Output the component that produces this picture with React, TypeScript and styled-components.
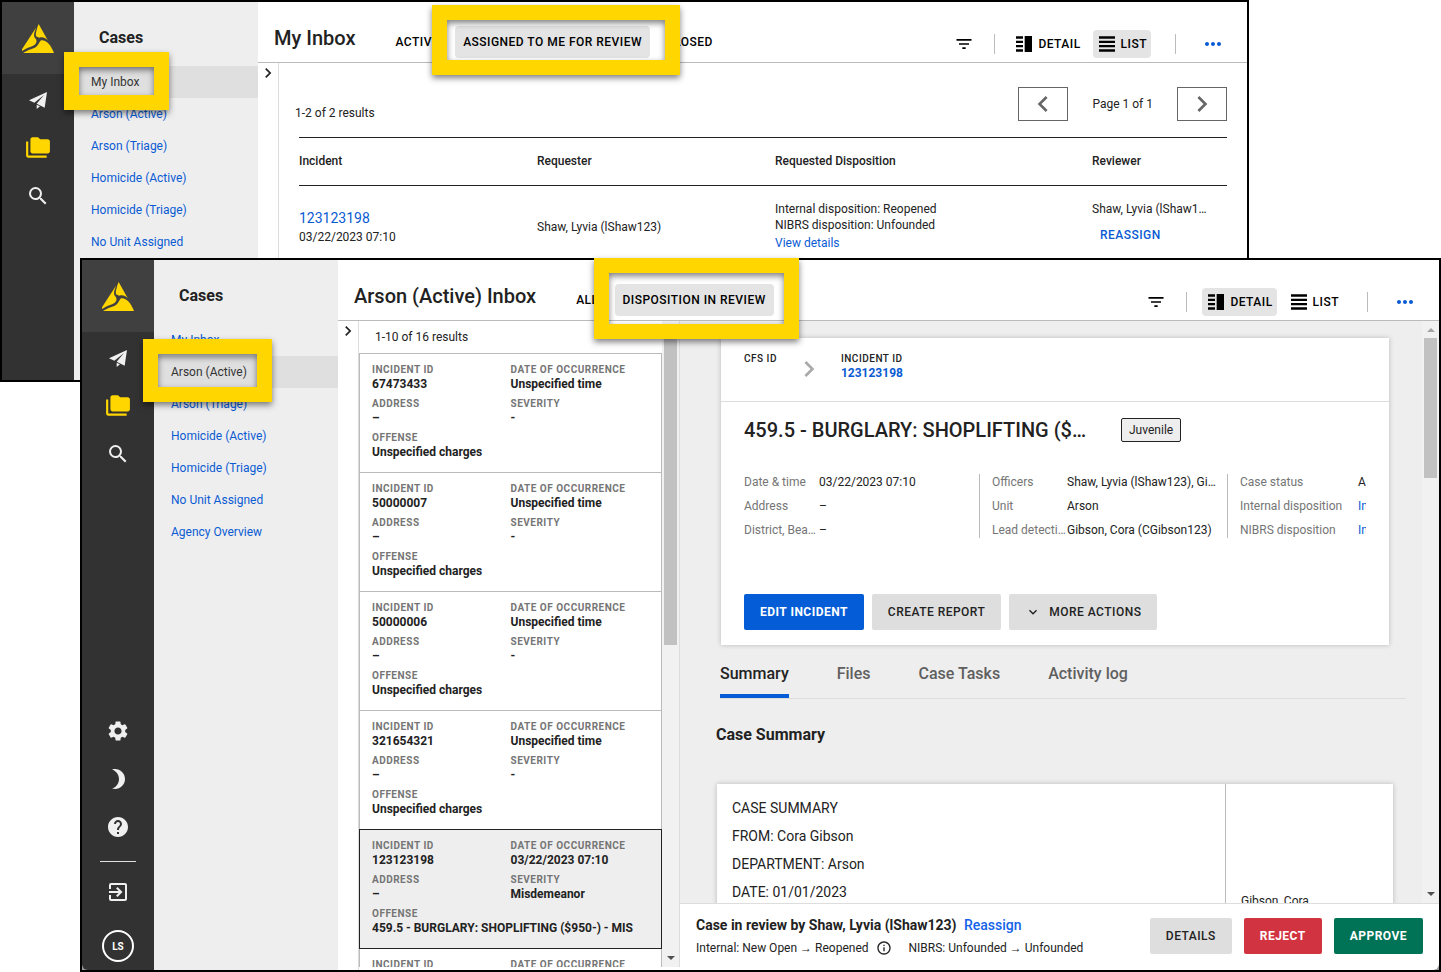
import React from 'react';
import styled, { createGlobalStyle, css } from 'styled-components';
import {
  MdBrightness3,
  MdChevronLeft,
  MdChevronRight,
  MdExitToApp,
  MdExpandMore,
  MdFilterList,
  MdFolderCopy,
  MdHelp,
  MdInfoOutline,
  MdMoreHoriz,
  MdSearch,
  MdSettings,
} from 'react-icons/md';

const color = {
  ink: '#222222',
  muted: '#757575',
  line: '#bbbbbb',
  softLine: '#dddddd',
  panel: '#eeeeee',
  rail: '#323232',
  railTop: '#404040',
  link: '#0a5bd3',
  accent: '#ffd600',
};

const GlobalStyle = createGlobalStyle`
  *, *::before, *::after { box-sizing: border-box; }
  body { margin: 0; background: #fff; }
  body, button { font-family: Roboto, "Liberation Sans", sans-serif; }
  body { color: ${color.ink}; font-size: 12px; line-height: 16px; }
  button { border: 0; background: none; padding: 0; color: inherit; cursor: pointer; }
  a { color: ${color.link}; text-decoration: none; }
  h1, h2, h3, p, ul, dl, dd { margin: 0; padding: 0; }
  ul { list-style: none; }
  svg { display: block; flex: none; }
`;

const Desktop = styled.div`
  position: relative;
  min-height: 100vh;
  overflow: hidden;
`;

const AppWindow = styled.section<{ $front?: boolean }>`
  position: absolute;
  display: flex;
  border: 2px solid #000;
  background: #fff;
  ${({ $front }) =>
    $front
      ? css`
          inset: 258px 0 0 80px;
          background: #999;
        `
      : css`
          inset: 0 192px auto 0;
          height: 382px;
        `}
`;

const Rail = styled.nav<{ $front?: boolean }>`
  flex: none;
  display: flex;
  flex-direction: column;
  align-items: center;
  width: 72px;
  background: ${color.rail};
  color: #f0f0f0;
  border-bottom-left-radius: ${({ $front }) => ($front ? '6px' : '0')};
`;

const Brand = styled.a`
  display: flex;
  align-items: center;
  justify-content: center;
  width: 100%;
  height: 72px;
  margin-bottom: 2px;
  background: ${color.railTop};
`;

const RailButton = styled.button<{ $active?: boolean }>`
  display: flex;
  align-items: center;
  justify-content: center;
  width: 48px;
  height: 48px;
  color: ${({ $active }) => ($active ? color.accent : 'inherit')};
`;

const RailFoot = styled.div`
  display: flex;
  flex-direction: column;
  align-items: center;
  margin-top: auto;
`;

const RailRule = styled.hr`
  width: 36px;
  height: 1px;
  margin: 10px 0 6px;
  border: 0;
  background: #e0e0e0;
`;

const Avatar = styled.button`
  width: 32px;
  height: 32px;
  margin: 14px 0 8px;
  border: 2px solid #fff;
  border-radius: 50%;
  color: #fff;
  font-size: 10px;
  font-weight: 700;
`;

const Sidebar = styled.aside`
  flex: none;
  width: 184px;
  background: ${color.panel};
`;

const SidebarTitle = styled.h2`
  height: 64px;
  padding: 26px 25px 0;
  font-size: 16px;
  line-height: 20px;
  font-weight: 700;
`;

const NavItem = styled.li<{ $active?: boolean }>`
  position: relative;
  padding: 8px 17px;
  background: ${({ $active }) => ($active ? '#dfdfdf' : 'transparent')};
  a {
    color: ${({ $active }) => ($active ? '#333' : color.link)};
  }
`;

/* Call-out frame that surrounds the item it is placed in. */
const Callout = styled.span<{ $inset: string }>`
  position: absolute;
  z-index: 5;
  inset: ${({ $inset }) => $inset};
  border: 15px solid ${color.accent};
  filter: drop-shadow(0 3px 3px rgba(0, 0, 0, 0.5));
  pointer-events: none;
`;

const Main = styled.main<{ $front?: boolean }>`
  flex: 1;
  min-width: 0;
  display: flex;
  flex-direction: column;
  background: #fff;
  border-bottom-right-radius: ${({ $front }) => ($front ? '6px' : '0')};
`;

const Header = styled.header`
  flex: none;
  display: flex;
  align-items: flex-end;
  height: 61px;
  padding: 0 14px 4px 16px;
  border-bottom: 1px solid ${color.line};
`;

const HeaderTitle = styled.h1`
  margin: 0 32px 8px 0;
  font-size: 20px;
  line-height: 24px;
  font-weight: 500;
  white-space: nowrap;
`;

const Tabs = styled.div`
  display: flex;
  gap: 8px;
`;

const Tab = styled.button<{ $active?: boolean }>`
  position: relative;
  height: 32px;
  padding: 0 8px;
  border-radius: 4px;
  background: ${({ $active }) => ($active ? '#e4e4e4' : 'transparent')};
  color: #000;
  font-size: 12px;
  line-height: 16px;
  font-weight: 500;
  letter-spacing: 0.04em;
  white-space: nowrap;
`;

const Tools = styled.div`
  display: flex;
  align-items: center;
  height: 28px;
  margin-left: auto;
`;

const Divider = styled.span<{ $gap: string }>`
  width: 1px;
  height: 20px;
  margin: ${({ $gap }) => $gap};
  background: ${color.line};
`;

const ModeButton = styled.button<{ $active?: boolean }>`
  display: flex;
  align-items: center;
  gap: 6px;
  height: 28px;
  margin-right: 8px;
  padding: 0 4px 0 6px;
  border-radius: 4px;
  background: ${({ $active }) => ($active ? '#e4e4e4' : 'transparent')};
  color: #000;
  font-size: 12px;
  font-weight: 500;
  letter-spacing: 0.04em;
`;

const ToolButton = styled.button<{ $blue?: boolean }>`
  padding: 0 ${({ $blue }) => ($blue ? '8px' : '4px')};
  color: ${({ $blue }) => ($blue ? color.link : '#000')};
`;

const Body = styled.div`
  flex: 1;
  min-height: 0;
  display: flex;
  overflow: hidden;
`;

const Collapse = styled.button`
  flex: none;
  align-self: stretch;
  display: flex;
  justify-content: center;
  align-items: flex-start;
  width: 21px;
  border-right: 1px solid ${color.softLine};
`;

/* ---- request list (back window) ---- */

const Requests = styled.div`
  flex: 1;
  min-width: 0;
  padding: 24px 20px 0;
`;

const Pager = styled.div`
  display: flex;
  align-items: flex-start;
  gap: 24px;
  height: 50px;
`;

const ResultCount = styled.p`
  margin: 18px auto 0 -4px;
`;

const PageLabel = styled.span`
  line-height: 34px;
`;

const PageButton = styled.button`
  display: flex;
  align-items: center;
  justify-content: center;
  width: 50px;
  height: 34px;
  border: 1px solid #666;
  color: #666;
`;

const RequestTable = styled.table`
  width: 100%;
  table-layout: fixed;
  border-collapse: collapse;
  text-align: left;
  th {
    height: 48px;
    padding: 0 0 2px;
    border-top: 1px solid ${color.ink};
    border-bottom: 1px solid ${color.ink};
    font-weight: 500;
  }
  td {
    padding: 15px 20px 14px 0;
    white-space: nowrap;
    overflow: hidden;
    text-overflow: ellipsis;
  }
`;

const CaseLink = styled.a`
  display: block;
  margin: 2px 0 3px;
  font-size: 14px;
`;

const DetailsLink = styled.a`
  display: block;
  margin: 2px 0 1px;
`;

const TextButton = styled.button`
  display: block;
  height: 35px;
  padding: 0 8px;
  color: ${color.link};
  font-size: 12px;
  font-weight: 500;
  letter-spacing: 0.04em;
`;

/* ---- inbox list (front window) ---- */

const Inbox = styled.div`
  flex: none;
  display: flex;
  margin-bottom: 3px;
  border-right: 1px solid ${color.softLine};
`;

const InboxList = styled.div`
  width: 303px;
  overflow: hidden;
`;

const InboxCount = styled.p`
  padding: 8px 16px;
`;

const IncidentCard = styled.li<{ $selected?: boolean }>`
  position: relative;
  z-index: ${({ $selected }) => ($selected ? 1 : 0)};
  height: 120px;
  margin-bottom: -1px;
  padding: 9px 12px;
  border: 1px solid ${({ $selected }) => ($selected ? color.ink : color.line)};
  background: ${({ $selected }) => ($selected ? color.panel : '#fff')};
`;

const CardFields = styled.dl`
  display: grid;
  grid-template-columns: 1fr 1fr;
  row-gap: 6px;
`;

const CardField = styled.div<{ $wide?: boolean }>`
  grid-column: ${({ $wide }) => ($wide ? '1 / -1' : 'auto')};
  line-height: 14px;
  white-space: nowrap;
  dt {
    color: ${color.muted};
    font-size: 10px;
    font-weight: 700;
    letter-spacing: 0.05em;
  }
  dd {
    font-weight: 700;
  }
`;

const ScrollTrack = styled.div`
  flex: none;
  display: flex;
  flex-direction: column;
  align-items: center;
  width: 17px;
  padding-bottom: 1px;
  background: #f1f1f1;
`;

const ScrollArrow = styled.span<{ $down?: boolean }>`
  display: flex;
  align-items: center;
  justify-content: center;
  height: 17px;
  margin-top: ${({ $down }) => ($down ? 'auto' : '0')};
  &::before {
    content: '';
    border: 4px solid transparent;
    border-top-width: ${({ $down }) => ($down ? '4px' : '0')};
    border-bottom-width: ${({ $down }) => ($down ? '0' : '4px')};
    border-top-color: ${({ $down }) => ($down ? '#505050' : 'transparent')};
    border-bottom-color: ${({ $down }) => ($down ? 'transparent' : '#a3a3a3')};
  }
`;

const ScrollThumb = styled.span<{ $length: string }>`
  width: 13px;
  height: ${({ $length }) => $length};
  background: #c1c1c1;
`;

/* ---- incident detail (front window) ---- */

const Detail = styled.div`
  flex: 1;
  min-width: 0;
  display: flex;
  flex-direction: column;
`;

const DetailView = styled.div`
  flex: 1;
  min-height: 0;
  display: flex;
  overflow: hidden;
  background: ${color.panel};
`;

const DetailContent = styled.div`
  flex: 1;
  min-width: 0;
  padding: 17px 16px 0 40px;
`;

const cardSurface = css`
  background: #fff;
  box-shadow: 0 0 5px rgba(0, 0, 0, 0.22);
`;

const IncidentPanel = styled.section`
  margin: 0 17px 0 1px;
  ${cardSurface}
`;

const Trail = styled.div`
  display: flex;
  height: 64px;
  padding: 14px 23px;
  border-bottom: 1px solid ${color.softLine};
  line-height: 14px;
  svg {
    margin: 1px 16px 0;
    color: #aaa;
  }
`;

const TrailStep = styled.div`
  span {
    display: block;
    font-size: 10px;
    font-weight: 500;
    letter-spacing: 0.05em;
  }
  a {
    font-weight: 700;
  }
`;

const PanelBody = styled.div`
  padding: 16px 23px 15px;
`;

const TitleRow = styled.div`
  display: flex;
  align-items: center;
  gap: 32px;
  margin-bottom: 32px;
`;

const IncidentTitle = styled.h2`
  width: 345px;
  overflow: hidden;
  font-size: 20px;
  line-height: 24px;
  font-weight: 500;
  text-overflow: ellipsis;
  white-space: nowrap;
`;

const Tag = styled.span`
  padding: 3px 7px;
  border: 1px solid ${color.ink};
  border-radius: 2px;
  background: ${color.panel};
`;

const FactColumns = styled.div`
  display: flex;
  gap: 12px;
  margin-bottom: 56px;
  overflow: hidden;
`;

const Facts = styled.dl<{ $last?: boolean }>`
  flex: ${({ $last }) => ($last ? '1' : '0 0 236px')};
  min-width: 0;
  display: grid;
  grid-template-columns: ${({ $last }) => ($last ? '118px' : '75px')} 1fr;
  row-gap: 8px;
  padding-right: ${({ $last }) => ($last ? '0' : '11px')};
  border-right: ${({ $last }) => ($last ? '0' : `1px solid ${color.line}`)};
  dt,
  dd {
    min-width: 0;
    overflow: hidden;
    text-overflow: ${({ $last }) => ($last ? 'clip' : 'ellipsis')};
    white-space: nowrap;
  }
  dt {
    color: ${color.muted};
  }
`;

const Actions = styled.div<{ $gap: string }>`
  display: flex;
  gap: ${({ $gap }) => $gap};
`;

const tones = {
  plain: css`
    background: #dedede;
    color: ${color.ink};
    font-weight: 500;
  `,
  primary: css`
    background: #045dd6;
    color: #fff;
    font-weight: 700;
  `,
  danger: css`
    background: #d23341;
    color: #fff;
    font-weight: 700;
  `,
  success: css`
    background: #007256;
    color: #fff;
    font-weight: 700;
  `,
};

const ActionButton = styled.button<{ $tone: keyof typeof tones }>`
  display: flex;
  align-items: center;
  gap: 8px;
  height: 36px;
  padding: 0 16px;
  border-radius: 2px;
  font-size: 12px;
  letter-spacing: 0.04em;
  white-space: nowrap;
  ${({ $tone }) => tones[$tone]}
`;

const DetailTabs = styled.div`
  display: flex;
  gap: 48px;
  height: 54px;
  border-bottom: 1px solid ${color.softLine};
`;

const DetailTab = styled.button<{ $active?: boolean }>`
  padding-top: 7px;
  border-bottom: 4px solid ${({ $active }) => ($active ? '#045dd6' : 'transparent')};
  color: ${({ $active }) => ($active ? color.ink : '#5f5f5f')};
  font-size: 16px;
  font-weight: 500;
`;

const SummaryTitle = styled.h3`
  margin: 26px 0 39px -4px;
  font-size: 16px;
  line-height: 20px;
  font-weight: 700;
`;

const SummaryCard = styled.section`
  display: flex;
  height: 234px;
  margin: 0 13px 0 -3px;
  ${cardSurface}
`;

const SummaryText = styled.div`
  flex: 1;
  padding: 10px 15px;
  border-right: 1px solid ${color.line};
  font-size: 14px;
  line-height: 28px;
`;

const SummaryAuthor = styled.div`
  display: flex;
  align-items: center;
  width: 167px;
  padding: 0 15px;
`;

const ReviewBar = styled.footer`
  flex: none;
  display: flex;
  align-items: center;
  justify-content: space-between;
  height: 67px;
  padding: 13px 16px 15px;
  border-top: 1px solid ${color.softLine};
`;

const ReviewTitle = styled.p`
  margin-bottom: 7px;
  font-size: 14px;
  font-weight: 700;
  a {
    margin-left: 4px;
    font-weight: 500;
    color: #1463e8;
  }
`;

const ReviewLine = styled.p`
  display: flex;
  align-items: center;
  svg {
    margin: 0 17px 0 7px;
  }
`;

/* ---- drawings ---- */

const Logo = () => (
  <svg width="32" height="29" viewBox="0 0 96 87" fill={color.accent} aria-hidden="true">
    <path d="M42 11 L0 76 V81 C10 74 22 70 32 66 C42 61 45 55 43 48 C41 43 36 42 36 34 C36 25 40 19 42 11z" />
    <path d="M50 0 L46 10 C44 20 40 28 42 37 L52 41 C62 37 72 42 78 50 C82 56 86 64 93 77z" />
    <path d="M3 87 H96 C92 77 87 67 80 59 C73 52 66 48 57 49 C50 57 48 67 37 72 C26 76 14 80 3 87z" />
  </svg>
);

const Plane = () => (
  <svg width="18" height="17" viewBox="0 0 54 51" fill="currentColor" aria-hidden="true">
    <path d="M54 0 L0 25 L16 32 L45 9 L23 35 L47 47z" />
    <path d="M23 38 V51 L33 43z" />
  </svg>
);

const DetailGlyph = () => (
  <svg width="16" height="16" viewBox="0 0 48 48" aria-hidden="true">
    <path d="M0 1h21v7H0zM0 14h21v7H0zM0 27h21v7H0zM0 40h21v7H0zM26 0h22v48H26z" />
  </svg>
);

const ListGlyph = () => (
  <svg width="16" height="16" viewBox="0 0 48 48" aria-hidden="true">
    <path d="M0 1h48v7H0zM0 14h48v7H0zM0 27h48v7H0zM0 40h48v7H0z" />
  </svg>
);

/* ---- composed parts ---- */

const RailTop = () => (
  <>
    <Brand href="#" aria-label="Home">
      <Logo />
    </Brand>
    <RailButton aria-label="Dispatch">
      <Plane />
    </RailButton>
    <RailButton $active aria-label="Cases">
      <MdFolderCopy size={26} />
    </RailButton>
    <RailButton aria-label="Search">
      <MdSearch size={24} />
    </RailButton>
  </>
);

const CaseNav = ({ items, current, inset }: { items: string[]; current: string; inset: string }) => (
  <Sidebar>
    <SidebarTitle>Cases</SidebarTitle>
    <ul>
      {items.map((item) => (
        <NavItem key={item} $active={item === current}>
          <a href="#">{item}</a>
          {item === current && <Callout $inset={inset} />}
        </NavItem>
      ))}
    </ul>
  </Sidebar>
);

interface TopBarProps {
  title: string;
  tabs: string[];
  current: string;
  inset: string;
  mode: 'detail' | 'list';
}

const TopBar = ({ title, tabs, current, inset, mode }: TopBarProps) => (
  <Header>
    <HeaderTitle>{title}</HeaderTitle>
    <Tabs>
      {tabs.map((tab) => (
        <Tab key={tab} $active={tab === current}>
          {tab}
          {tab === current && <Callout $inset={inset} />}
        </Tab>
      ))}
    </Tabs>
    <Tools>
      <ToolButton aria-label="Filter">
        <MdFilterList size={20} />
      </ToolButton>
      <Divider $gap="0 15px 0 16px" />
      <ModeButton $active={mode === 'detail'}>
        <DetailGlyph />
        DETAIL
      </ModeButton>
      <ModeButton $active={mode === 'list'}>
        <ListGlyph />
        LIST
      </ModeButton>
      <Divider $gap="0 17px 0 16px" />
      <ToolButton $blue aria-label="More">
        <MdMoreHoriz size={24} />
      </ToolButton>
    </Tools>
  </Header>
);

const navItems = [
  'My Inbox',
  'Arson (Active)',
  'Arson (Triage)',
  'Homicide (Active)',
  'Homicide (Triage)',
  'No Unit Assigned',
];

interface Incident {
  id: string;
  date: string;
  severity: string;
  offense: string;
}

const blank = { date: 'Unspecified time', severity: '-', offense: 'Unspecified charges' };

const incidents: Incident[] = [
  { id: '67473433', ...blank },
  { id: '50000007', ...blank },
  { id: '50000006', ...blank },
  { id: '321654321', ...blank },
  {
    id: '123123198',
    date: '03/22/2023 07:10',
    severity: 'Misdemeanor',
    offense: '459.5 - BURGLARY: SHOPLIFTING ($950-) - MIS',
  },
  { id: '', ...blank },
];

const MyInboxWindow = () => (
  <AppWindow>
    <Rail>
      <RailTop />
    </Rail>
    <CaseNav items={navItems} current="My Inbox" inset="-14px 89px -12px -10px" />
    <Main>
      <TopBar
        title="My Inbox"
        tabs={['ACTIVE', 'ASSIGNED TO ME FOR REVIEW', 'CLOSED']}
        current="ASSIGNED TO ME FOR REVIEW"
        inset="-21px -30px -17px -23px"
        mode="list"
      />
      <Body>
        <Collapse aria-label="Expand panel">
          <MdChevronRight size={20} />
        </Collapse>
        <Requests>
          <Pager>
            <ResultCount>1-2 of 2 results</ResultCount>
            <PageButton aria-label="Previous page">
              <MdChevronLeft size={32} />
            </PageButton>
            <PageLabel>Page 1 of 1</PageLabel>
            <PageButton aria-label="Next page">
              <MdChevronRight size={32} />
            </PageButton>
          </Pager>
          <RequestTable>
            <colgroup>
              <col width="238" />
              <col width="238" />
              <col />
              <col width="135" />
            </colgroup>
            <thead>
              <tr>
                <th>Incident</th>
                <th>Requester</th>
                <th>Requested Disposition</th>
                <th>Reviewer</th>
              </tr>
            </thead>
            <tbody>
              <tr>
                <td>
                  <CaseLink href="#">123123198</CaseLink>
                  03/22/2023 07:10
                </td>
                <td>Shaw, Lyvia (lShaw123)</td>
                <td>
                  Internal disposition: Reopened
                  <br />
                  NIBRS disposition: Unfounded
                  <DetailsLink href="#">View details</DetailsLink>
                </td>
                <td>
                  Shaw, Lyvia (lShaw123)
                  <TextButton>REASSIGN</TextButton>
                </td>
              </tr>
            </tbody>
          </RequestTable>
        </Requests>
      </Body>
    </Main>
  </AppWindow>
);

const IncidentList = () => (
  <Inbox>
    <InboxList>
      <InboxCount>1-10 of 16 results</InboxCount>
      <ul>
        {incidents.map(({ id, date, severity, offense }) => (
          <IncidentCard key={id} $selected={id === '123123198'}>
            <CardFields>
              <CardField>
                <dt>INCIDENT ID</dt>
                <dd>{id}</dd>
              </CardField>
              <CardField>
                <dt>DATE OF OCCURRENCE</dt>
                <dd>{id && date}</dd>
              </CardField>
              {id && (
                <>
                  <CardField>
                    <dt>ADDRESS</dt>
                    <dd>–</dd>
                  </CardField>
                  <CardField>
                    <dt>SEVERITY</dt>
                    <dd>{severity}</dd>
                  </CardField>
                  <CardField $wide>
                    <dt>OFFENSE</dt>
                    <dd>{offense}</dd>
                  </CardField>
                </>
              )}
            </CardFields>
          </IncidentCard>
        ))}
      </ul>
    </InboxList>
    <ScrollTrack>
      <ScrollArrow />
      <ScrollThumb $length="307px" />
      <ScrollArrow $down />
    </ScrollTrack>
  </Inbox>
);

const IncidentDetail = () => (
  <Detail>
    <DetailView>
      <DetailContent>
        <IncidentPanel>
          <Trail>
            <TrailStep>
              <span>CFS ID</span>
            </TrailStep>
            <MdChevronRight size={32} />
            <TrailStep>
              <span>INCIDENT ID</span>
              <a href="#">123123198</a>
            </TrailStep>
          </Trail>
          <PanelBody>
            <TitleRow>
              <IncidentTitle>459.5 - BURGLARY: SHOPLIFTING ($950-) - MIS</IncidentTitle>
              <Tag>Juvenile</Tag>
            </TitleRow>
            <FactColumns>
              <Facts>
                <dt>Date &amp; time</dt>
                <dd>03/22/2023 07:10</dd>
                <dt>Address</dt>
                <dd>–</dd>
                <dt>District, Beat, Area</dt>
                <dd>–</dd>
              </Facts>
              <Facts>
                <dt>Officers</dt>
                <dd>Shaw, Lyvia (lShaw123), Gibson, Cora</dd>
                <dt>Unit</dt>
                <dd>Arson</dd>
                <dt>Lead detective</dt>
                <dd>Gibson, Cora (CGibson123)</dd>
              </Facts>
              <Facts $last>
                <dt>Case status</dt>
                <dd>Active</dd>
                <dt>Internal disposition</dt>
                <dd>
                  <a href="#">In review</a>
                </dd>
                <dt>NIBRS disposition</dt>
                <dd>
                  <a href="#">In review</a>
                </dd>
              </Facts>
            </FactColumns>
            <Actions $gap="8px">
              <ActionButton $tone="primary">EDIT INCIDENT</ActionButton>
              <ActionButton $tone="plain">CREATE REPORT</ActionButton>
              <ActionButton $tone="plain">
                <MdExpandMore size={16} />
                MORE ACTIONS
              </ActionButton>
            </Actions>
          </PanelBody>
        </IncidentPanel>
        <DetailTabs>
          <DetailTab $active>Summary</DetailTab>
          <DetailTab>Files</DetailTab>
          <DetailTab>Case Tasks</DetailTab>
          <DetailTab>Activity log</DetailTab>
        </DetailTabs>
        <SummaryTitle>Case Summary</SummaryTitle>
        <SummaryCard>
          <SummaryText>
            <p>CASE SUMMARY</p>
            <p>FROM: Cora Gibson</p>
            <p>DEPARTMENT: Arson</p>
            <p>DATE: 01/01/2023</p>
          </SummaryText>
          <SummaryAuthor>Gibson, Cora</SummaryAuthor>
        </SummaryCard>
      </DetailContent>
      <ScrollTrack>
        <ScrollArrow />
        <ScrollThumb $length="140px" />
        <ScrollArrow $down />
      </ScrollTrack>
    </DetailView>
    <ReviewBar>
      <div>
        <ReviewTitle>
          Case in review by Shaw, Lyvia (lShaw123) <a href="#">Reassign</a>
        </ReviewTitle>
        <ReviewLine>
          Internal: New Open → Reopened
          <MdInfoOutline size={16} />
          NIBRS: Unfounded → Unfounded
        </ReviewLine>
      </div>
      <Actions $gap="12px">
        <ActionButton $tone="plain">DETAILS</ActionButton>
        <ActionButton $tone="danger">REJECT</ActionButton>
        <ActionButton $tone="success">APPROVE</ActionButton>
      </Actions>
    </ReviewBar>
  </Detail>
);

const ArsonInboxWindow = () => (
  <AppWindow $front>
    <Rail $front>
      <RailTop />
      <RailFoot>
        <RailButton aria-label="Settings">
          <MdSettings size={24} />
        </RailButton>
        <RailButton aria-label="Dark mode">
          <MdBrightness3 size={24} />
        </RailButton>
        <RailButton aria-label="Help">
          <MdHelp size={24} />
        </RailButton>
        <RailRule />
        <RailButton aria-label="Sign out">
          <MdExitToApp size={24} />
        </RailButton>
        <Avatar>LS</Avatar>
      </RailFoot>
    </Rail>
    <CaseNav
      items={[...navItems, 'Agency Overview']}
      current="Arson (Active)"
      inset="-17px 66px -14px -11px"
    />
    <Main $front>
      <TopBar
        title="Arson (Active) Inbox"
        tabs={['ALL', 'DISPOSITION IN REVIEW']}
        current="DISPOSITION IN REVIEW"
        inset="-26px -25px -23px -21px"
        mode="detail"
      />
      <Body>
        <Collapse aria-label="Expand panel">
          <MdChevronRight size={20} />
        </Collapse>
        <IncidentList />
        <IncidentDetail />
      </Body>
    </Main>
  </AppWindow>
);

export default function App() {
  return (
    <>
      <GlobalStyle />
      <Desktop>
        <MyInboxWindow />
        <ArsonInboxWindow />
      </Desktop>
    </>
  );
}
